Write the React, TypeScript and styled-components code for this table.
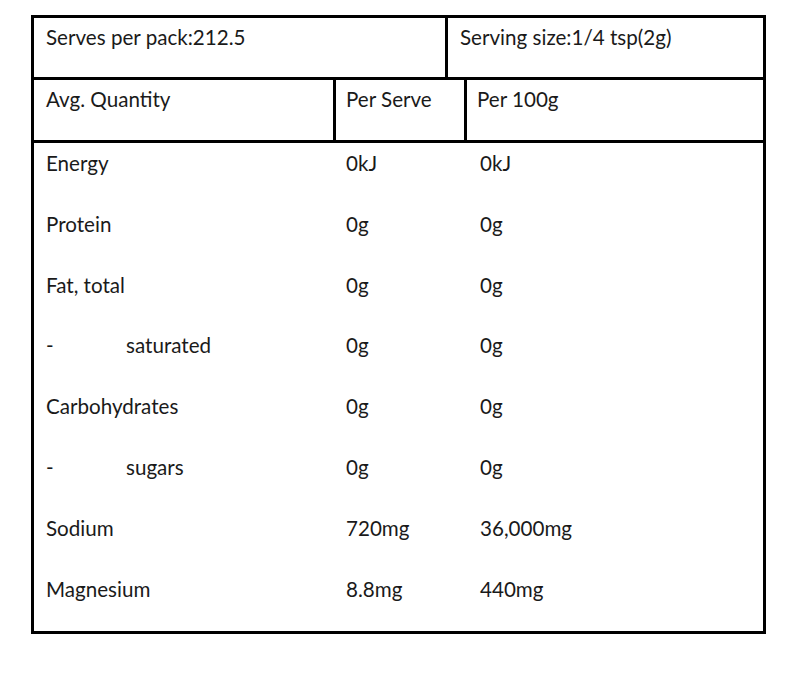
import styled, { createGlobalStyle } from 'styled-components'

const GlobalStyle = createGlobalStyle`
  body {
    margin: 0;
    background: #fff;
    font-family: Lato, "Open Sans", sans-serif;
    color: #1a1a1a;
  }
`

const rows = [
  { name: 'Energy', serve: '0kJ', per100: '0kJ' },
  { name: 'Protein', serve: '0g', per100: '0g' },
  { name: 'Fat, total', serve: '0g', per100: '0g' },
  { name: 'saturated', sub: true, serve: '0g', per100: '0g' },
  { name: 'Carbohydrates', serve: '0g', per100: '0g' },
  { name: 'sugars', sub: true, serve: '0g', per100: '0g' },
  { name: 'Sodium', serve: '720mg', per100: '36,000mg' },
  { name: 'Magnesium', serve: '8.8mg', per100: '440mg' },
]

const App = () => {
  return (
    <>
      <GlobalStyle />
      <Panel>
        <TopRow>
          <TopCell $width={414}>Serves per pack:212.5</TopCell>
          <TopCell>Serving size:1/4 tsp(2g)</TopCell>
        </TopRow>

        <HeadRow>
          <HeadCell>Avg. Quantity</HeadCell>
          <HeadCell>Per Serve</HeadCell>
          <HeadCell>Per 100g</HeadCell>
        </HeadRow>

        <Body>
          {rows.map((r) => (
            <DataRow key={r.name}>
              <Cell>
                {r.sub && <Dash>-</Dash>}
                {r.name}
              </Cell>
              <Cell>{r.serve}</Cell>
              <Cell>{r.per100}</Cell>
            </DataRow>
          ))}
        </Body>
      </Panel>
    </>
  )
}

export default App

const Panel = styled.div`
    box-sizing: border-box;
    width: 735px;
    margin: 15px 0 0 31px;
    border: 3px solid #000;
    font-size: 20.6px;
    line-height: 24px;
`

const TopRow = styled.div`
    display: flex;
    height: 59px;
    border-bottom: 3px solid #000;
`

const TopCell = styled.div<{ $width?: number }>`
    box-sizing: border-box;
    padding: 7px 12px 0 12px;
    ${({ $width }) => $width ? `width: ${$width}px; border-right: 3px solid #000;` : 'flex: 1;'}
`

const HeadRow = styled.div`
    display: grid;
    grid-template-columns: 302px 131px 1fr;
    height: 60px;
    border-bottom: 3px solid #000;
`

const HeadCell = styled.div`
    box-sizing: border-box;
    padding: 7px 11px 0 12px;

    &:not(:first-child){
        padding-left: 10px;
    }

    &:not(:last-child){
        border-right: 3px solid #000;
    }
`

const Body = styled.div`
    display: flex;
    flex-direction: column;
    padding-bottom: 2px;
`

const DataRow = styled.div`
    display: grid;
    grid-template-columns: 300px 134px 1fr;
    height: 60.8px;
`

const Cell = styled.div`
    padding: 8px 0 0 12px;
    white-space: nowrap;
`

const Dash = styled.span`
    display: inline-block;
    width: 80px;
`
